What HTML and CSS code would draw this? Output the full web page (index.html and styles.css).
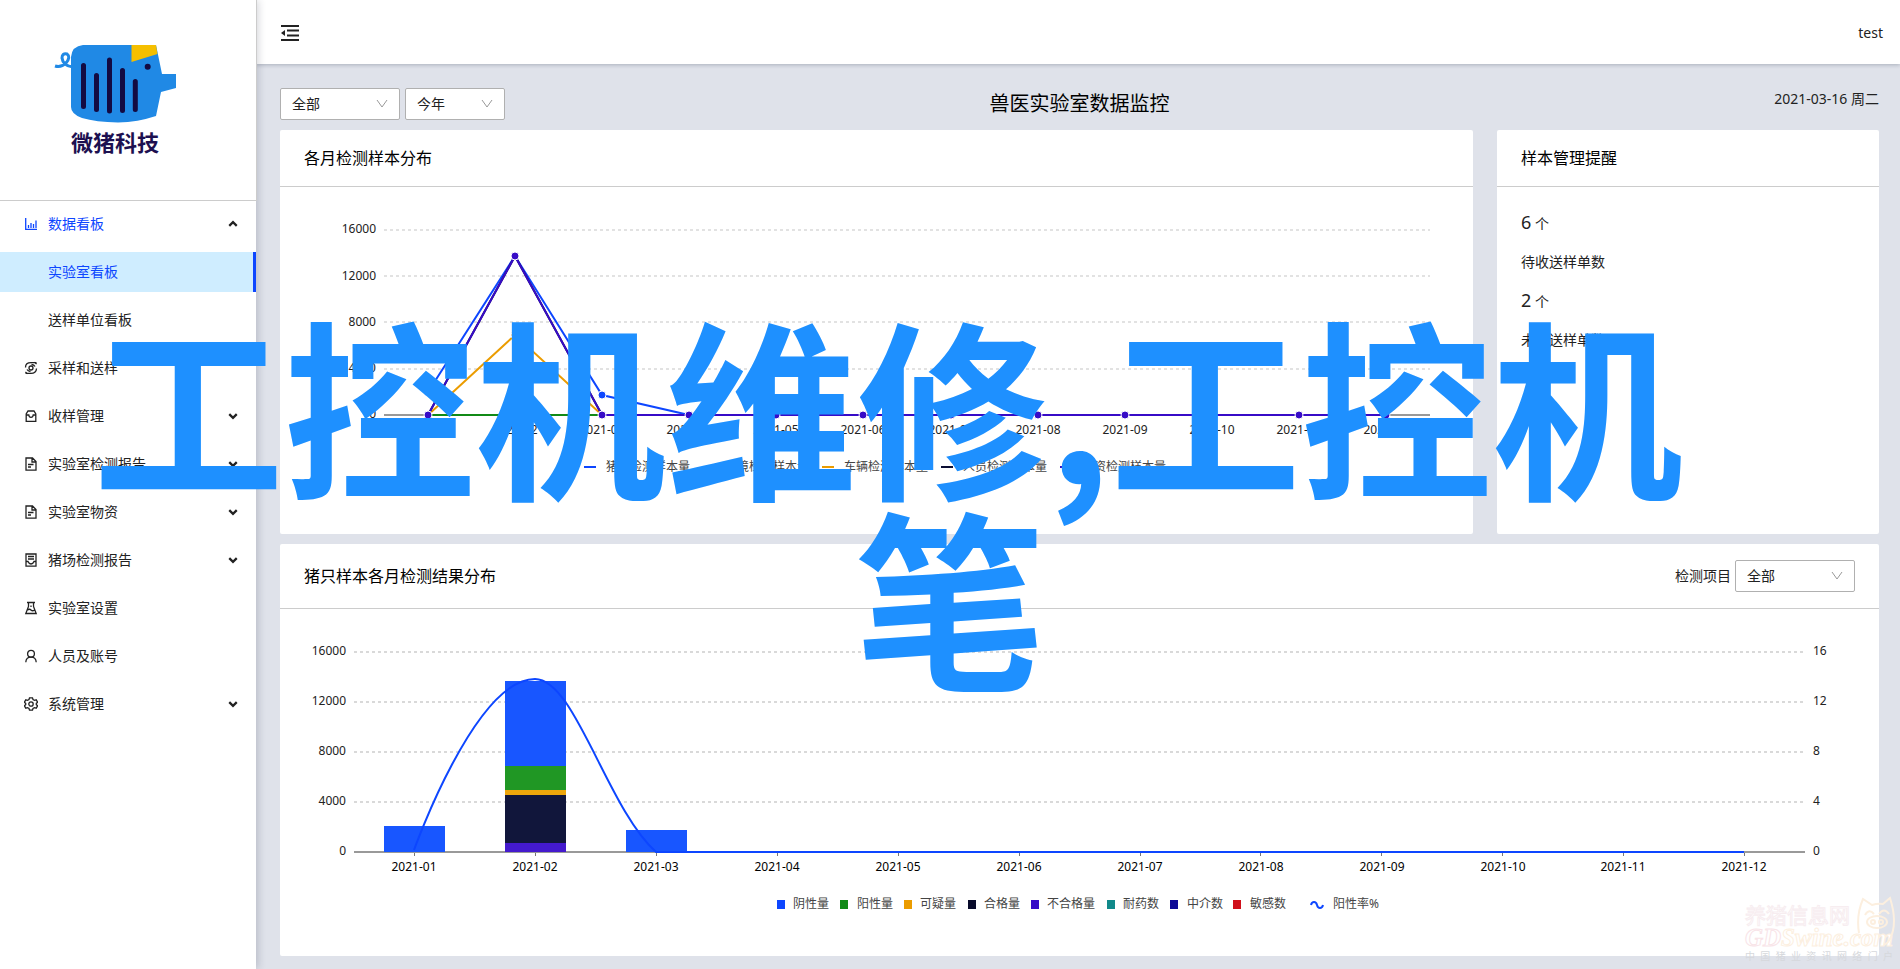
FILE: index.html
```html
<!DOCTYPE html>
<html lang="zh-CN">
<head>
<meta charset="utf-8">
<title>兽医实验室数据监控</title>
<link rel="stylesheet" href="styles.css">
</head>
<body>
<div class="app">
  <aside class="sidebar">
    <div class="brand">
      <svg class="brand-logo" viewBox="0 0 256 200" role="img" aria-label="微猪科技">
        <path d="M55 66 Q61 68 66 63 Q71 57 67 54 Q62 53 62 58 Q63 66 73 67" fill="none" stroke="#2089e5" stroke-width="3"/>
        <path d="M83 45 H156 L162 74 H176 V88 L161 92 L156 116 Q138 122 118 122.500 Q96 122 82 118 Q71 114 71 107 V57 Q72 46 83 45Z" fill="#2089e5"/>
        <path d="M131.500 45 H156 L157.500 54 L131.500 62Z" fill="#f5bf00"/>
        <circle cx="147.700" cy="66.700" r="3" fill="#130a42"/>
        <path d="M83.500 65.500V106.500M96.500 75.500V109.500M109.500 60V111M122.500 70.500V110.500M135.300 81.500V109.500" stroke="#130a42" stroke-width="5" stroke-linecap="round"/>
        <text x="71" y="151" class="brand-name">微猪科技</text>
      </svg>
    </div>
    <nav class="menu">
      <a class="menu-item is-open" href="#">
        <svg class="menu-icon" viewBox="0 0 14 14"><path d="M1.700 1V12.300H13M4.500 11V8M7 11V6M9.500 11V7M12 11V3.500"/></svg>
        <span class="menu-text">数据看板</span>
        <svg class="menu-arrow" viewBox="0 0 8 8"><path d="M1 5.500L4 2.500L7 5.500"/></svg>
      </a>
      <a class="menu-item is-sub is-active" href="#">实验室看板</a>
      <a class="menu-item is-sub" href="#">送样单位看板</a>
      <a class="menu-item" href="#">
        <svg class="menu-icon" viewBox="0 0 14 14"><circle cx="7" cy="7" r="2"/><path d="M1.500 6.500C1.500 3 4 1.700 7 1.700H12.500M10.500 1.200L12.600 3M12.500 7.500C12.500 11 10 12.300 7 12.300H1.500M3.500 12.800L1.400 11M3 8.500C3.800 10 5 10.300 6.500 10.500M11 5.500C10.200 4 9 3.700 7.500 3.500"/></svg>
        <span class="menu-text">采样和送样</span>
      </a>
      <a class="menu-item" href="#">
        <svg class="menu-icon" viewBox="0 0 14 14"><path d="M2.200 12.300V5L4 2H10L11.800 5V12.300ZM2.200 6H4.800Q5 8.300 7 8.300T9.200 6H11.800"/></svg>
        <span class="menu-text">收样管理</span>
        <svg class="menu-arrow" viewBox="0 0 8 8"><path d="M1 2.500L4 5.500L7 2.500"/></svg>
      </a>
      <a class="menu-item" href="#">
        <svg class="menu-icon" viewBox="0 0 14 14"><path d="M2 1H8.500L12 4.500V13.200H2ZM8 1V5H12M4 7.500H9.500M4 10H7"/></svg>
        <span class="menu-text">实验室检测报告</span>
        <svg class="menu-arrow" viewBox="0 0 8 8"><path d="M1 2.500L4 5.500L7 2.500"/></svg>
      </a>
      <a class="menu-item" href="#">
        <svg class="menu-icon" viewBox="0 0 14 14"><path d="M2 1H8.500L12 4.500V13.200H2ZM8 1V5H12M4 7.500H9.500M4 10H7"/></svg>
        <span class="menu-text">实验室物资</span>
        <svg class="menu-arrow" viewBox="0 0 8 8"><path d="M1 2.500L4 5.500L7 2.500"/></svg>
      </a>
      <a class="menu-item" href="#">
        <svg class="menu-icon" viewBox="0 0 14 14"><path d="M2 1H12V13.200H2ZM4 3.500H10M4 6H10M2 8.500H4Q5 11 7 11T10 8.500H12"/></svg>
        <span class="menu-text">猪场检测报告</span>
        <svg class="menu-arrow" viewBox="0 0 8 8"><path d="M1 2.500L4 5.500L7 2.500"/></svg>
      </a>
      <a class="menu-item" href="#">
        <svg class="menu-icon" viewBox="0 0 14 14"><path d="M3 1.500H11M4.500 1.500V5.500L1.800 12.500H12.200L9.500 5.500V1.500M3.500 9Q5.500 7.500 7 9T10.500 9M7 4.500V6"/></svg>
        <span class="menu-text">实验室设置</span>
      </a>
      <a class="menu-item" href="#">
        <svg class="menu-icon" viewBox="0 0 14 14"><circle cx="7" cy="4.700" r="3.400"/><path d="M1.800 13.200Q2 8.200 7 8.200T12.200 13.200"/></svg>
        <span class="menu-text">人员及账号</span>
      </a>
      <a class="menu-item" href="#">
        <svg class="menu-icon" viewBox="0 0 14 14"><circle cx="7" cy="7" r="2.200"/><path d="M5.500 0.800H8.500L9 2.500L10.500 3.300L12.200 2.800L13.600 5.200L12.300 6.400V7.600L13.600 8.800L12.200 11.200L10.500 10.700L9 11.500L8.500 13.200H5.500L5 11.500L3.500 10.700L1.800 11.200L0.400 8.800L1.700 7.600V6.400L0.400 5.200L1.800 2.800L3.500 3.300L5 2.500Z"/></svg>
        <span class="menu-text">系统管理</span>
        <svg class="menu-arrow" viewBox="0 0 8 8"><path d="M1 2.500L4 5.500L7 2.500"/></svg>
      </a>
    </nav>
  </aside>

  <div class="page">
    <header class="topbar">
      <button class="fold" type="button" aria-label="收起菜单">
        <svg viewBox="0 0 20 18"><path d="M1 2H19M7 6.500H19M7 11.500H19M1 16H19" fill="none" stroke="#222" stroke-width="2"/><path d="M5 6V12L1 9Z" fill="#222"/></svg>
      </button>
      <span class="user">test</span>
    </header>

    <main class="content">
      <div class="toolbar">
        <div class="filters">
          <span class="select">
            <select aria-label="范围"><option>全部</option></select>
            <svg viewBox="0 0 12 12"><path d="M1 2L6 9L11 2"/></svg>
          </span>
          <span class="select is-narrow">
            <select aria-label="时间"><option>今年</option></select>
            <svg viewBox="0 0 12 12"><path d="M1 2L6 9L11 2"/></svg>
          </span>
        </div>
        <h1 class="title">兽医实验室数据监控</h1>
        <time class="date" datetime="2021-03-16">2021-03-16 周二</time>
      </div>

      <div class="row">
        <section class="card">
          <div class="card-head"><h2>各月检测样本分布</h2></div>
          <svg class="chart" viewBox="280 187 1193 347">
            <g class="grid">
              <path d="M384 230H1430M384 276H1430M384 322H1430M384 369H1430"/>
            </g>
            <path class="axis" d="M384 415H1430"/>
            <g class="label is-end">
              <text x="376" y="233">16000</text><text x="376" y="280">12000</text><text x="376" y="326">8000</text><text x="376" y="372">4000</text><text x="376" y="418">0</text>
            </g>
            <g class="label is-mid">
              <text x="428" y="434">2021-01</text><text x="515" y="434">2021-02</text><text x="602" y="434">2021-03</text><text x="689" y="434">2021-04</text><text x="776" y="434">2021-05</text><text x="863" y="434">2021-06</text><text x="951" y="434">2021-07</text><text x="1038" y="434">2021-08</text><text x="1125" y="434">2021-09</text><text x="1212" y="434">2021-10</text><text x="1299" y="434">2021-11</text><text x="1386" y="434">2021-12</text>
            </g>
            <g class="series">
              <path stroke="#0d46ff" d="M428 392L515 256L602 395L689 415"/>
              <path stroke="#118a17" d="M428 415H602"/>
              <path stroke="#eb9c00" d="M428 415L515 335L602 415"/>
              <path stroke="#0b0e33" d="M428 415L515 256L602 415"/>
              <path stroke="#370bc7" d="M428 415L515 256L602 415H1386"/>
            </g>
            <g class="dots">
              <circle class="is-blue" cx="428" cy="392" r="4"/><circle class="is-blue" cx="602" cy="395" r="4"/>
              <circle class="is-amber" cx="515" cy="335" r="4"/>
              <circle cx="428" cy="415" r="4"/><circle cx="515" cy="256" r="4"/><circle cx="602" cy="415" r="4"/><circle cx="689" cy="415" r="4"/><circle cx="776" cy="415" r="4"/><circle cx="863" cy="415" r="4"/><circle cx="951" cy="415" r="4"/><circle cx="1038" cy="415" r="4"/><circle cx="1125" cy="415" r="4"/><circle cx="1212" cy="415" r="4"/><circle cx="1299" cy="415" r="4"/><circle cx="1386" cy="415" r="4"/>
            </g>
            <g class="series">
              <path stroke="#0d46ff" d="M584 467H596"/><path stroke="#118a17" d="M703 467H715"/><path stroke="#eb9c00" d="M822 467H834"/><path stroke="#0b0e33" d="M941 467H953"/><path stroke="#370bc7" d="M1060 467H1072"/>
            </g>
            <g class="legend">
              <text x="606" y="471">猪只检测样本量</text><text x="725" y="471">环境检测样本量</text><text x="844" y="471">车辆检测样本量</text><text x="963" y="471">人员检测样本量</text><text x="1082" y="471">物资检测样本量</text>
            </g>
          </svg>
        </section>

        <section class="card">
          <div class="card-head"><h2>样本管理提醒</h2></div>
          <dl class="notice">
            <dd><b>6</b> 个</dd><dt>待收送样单数</dt>
            <dd><b>2</b> 个</dd><dt>未检送样单数</dt>
          </dl>
        </section>
      </div>

      <section class="card">
        <div class="card-head is-tall">
          <h2>猪只样本各月检测结果分布</h2>
          <div class="field">
            <label for="project">检测项目</label>
            <span class="select">
              <select id="project"><option>全部</option></select>
              <svg viewBox="0 0 12 12"><path d="M1 2L6 9L11 2"/></svg>
            </span>
          </div>
        </div>
        <svg class="chart" viewBox="280 609 1599 347">
          <g class="grid is-bold"><path d="M354 652H1805M354 702H1805M354 752H1805M354 802H1805"/></g>
          <path class="axis" d="M354 852H1805"/>
          <path class="tick" d="M414.500 853V856M535.500 853V856M656.500 853V856M777.500 853V856M898.500 853V856M1019.500 853V856M1140.500 853V856M1260.500 853V856M1381.500 853V856M1502.500 853V856M1623.500 853V856M1744.500 853V856"/>
          <g class="label is-end">
            <text x="346" y="655">16000</text><text x="346" y="705">12000</text><text x="346" y="755">8000</text><text x="346" y="805">4000</text><text x="346" y="855">0</text>
          </g>
          <g class="label">
            <text x="1813" y="655">16</text><text x="1813" y="705">12</text><text x="1813" y="755">8</text><text x="1813" y="805">4</text><text x="1813" y="855">0</text>
          </g>
          <g class="label is-mid is-dark">
            <text x="414" y="871">2021-01</text><text x="535" y="871">2021-02</text><text x="656" y="871">2021-03</text><text x="777" y="871">2021-04</text><text x="898" y="871">2021-05</text><text x="1019" y="871">2021-06</text><text x="1140" y="871">2021-07</text><text x="1261" y="871">2021-08</text><text x="1382" y="871">2021-09</text><text x="1503" y="871">2021-10</text><text x="1623" y="871">2021-11</text><text x="1744" y="871">2021-12</text>
          </g>
          <rect x="384" y="826" width="61" height="26" fill="#1856ff"/>
          <rect x="626" y="830" width="61" height="22" fill="#1856ff"/>
          <rect x="505" y="681" width="61" height="85" fill="#1856ff"/>
          <rect x="505" y="766" width="61" height="24" fill="#209724"/>
          <rect x="505" y="790" width="61" height="5" fill="#eda60c"/>
          <rect x="505" y="795" width="61" height="48" fill="#11163b"/>
          <rect x="505" y="843" width="61" height="9" fill="#441acd"/>
          <g class="series"><path stroke="#0d46ff" d="M414 850C414 850 475 679 535 679C575 679 607 808 656 852H1744"/></g>
          <rect x="777" y="900" width="8" height="9" fill="#0d46ff"/><rect x="840" y="900" width="8" height="9" fill="#118a17"/><rect x="904" y="900" width="8" height="9" fill="#eb9c00"/><rect x="968" y="900" width="8" height="9" fill="#080b2b"/><rect x="1031" y="900" width="8" height="9" fill="#370bc7"/><rect x="1107" y="900" width="8" height="9" fill="#11898a"/><rect x="1170" y="900" width="8" height="9" fill="#0d0a96"/><rect x="1233" y="900" width="8" height="9" fill="#d0111c"/>
          <g class="series"><path stroke="#0d46ff" d="M1311 905C1312 901 1316 901 1317 905S1322 909 1323 905"/></g>
          <g class="legend">
            <text x="793" y="908">阴性量</text><text x="857" y="908">阳性量</text><text x="920" y="908">可疑量</text><text x="984" y="908">合格量</text><text x="1047" y="908">不合格量</text><text x="1123" y="908">耐药数</text><text x="1187" y="908">中介数</text><text x="1250" y="908">敏感数</text><text x="1333" y="908">阳性率%</text>
          </g>
        </svg>
      </section>
    </main>
  </div>

  <div class="headline">
    <span class="headline-first">工控机维修,工控机</span>
    <span>笔</span>
  </div>

  <div class="stamp">
    <svg class="stamp-pig" viewBox="0 0 40 52"><path d="M3 38Q0 20 7 4L16 10Q22 8 27 9L34 3Q42 28 34 44Q32 48 28 50M9 20Q13 13 18 19M23 19Q28 12 33 19"/><ellipse cx="21" cy="27" rx="10" ry="6"/><circle cx="17" cy="27" r="2"/><circle cx="25" cy="27" r="2"/></svg>
    <div class="stamp-name">养猪信息网</div>
    <div class="stamp-site"><i>GD</i>Swine.com</div>
    <div class="stamp-line"><span>中</span><span>国</span><span>猪</span><span>业</span><span>资</span><span>讯</span><span>网</span><span>络</span><span>门</span><span>户</span></div>
  </div>
</div>
</body>
</html>
```

FILE: styles.css
```css
* { box-sizing: border-box; }

body {
  margin: 0;
  background: #dfe2ea;
  color: #222;
  font: 14px/20px "Noto Sans", "Noto Sans CJK SC", sans-serif;
}

.app {
  position: relative;
  display: flex;
  min-height: 100vh;
  overflow: hidden;
}

/* Sidebar */
.sidebar {
  position: relative;
  z-index: 2;
  flex: 0 0 256px;
  min-width: 0;
  background: #fff;
  box-shadow: 2px 0 8px rgba(30, 35, 60, 0.2);
}

.brand {
  width: 257px;
  border-right: 1px solid #ccc;
  border-bottom: 1px solid #ccc;
}

.brand-logo { display: block; width: 256px; }

.brand-name {
  font-size: 22px;
  font-weight: 700;
  fill: #1d1050;
}

.menu { padding-top: 3px; }

.menu-item {
  display: flex;
  align-items: center;
  gap: 10px;
  height: 40px;
  margin-bottom: 8px;
  padding: 0 18px 0 24px;
  color: #222;
  text-decoration: none;
}

.menu-item.is-open { color: #0d46ff; }
.menu-item.is-sub { padding-left: 48px; }

.menu-item.is-active {
  color: #0d46ff;
  background: #cfedff;
  border-right: 3px solid #0d46ff;
}

.menu-text { flex: 1; }

.menu-icon {
  width: 14px;
  height: 14px;
  fill: none;
  stroke: currentColor;
  stroke-width: 1.3;
}

.menu-arrow {
  width: 10px;
  height: 10px;
  fill: none;
  stroke: #222;
  stroke-width: 1.8;
}

/* Page */
.page { flex: 1; min-width: 0; }

.topbar {
  position: relative;
  display: flex;
  align-items: center;
  justify-content: space-between;
  height: 64px;
  padding: 2px 17px 0 24px;
  background: #fff;
  box-shadow: 0 1px 4px rgba(0, 21, 41, 0.24);
}

.fold {
  display: flex;
  width: 20px;
  padding: 0;
  border: 0;
  background: none;
}

.fold svg { width: 20px; height: 18px; }

.content {
  display: flex;
  flex-direction: column;
  gap: 10px;
  padding: 24px 21px 13px 24px;
}

.toolbar {
  display: grid;
  grid-template-columns: 1fr auto 1fr;
  align-items: center;
}

.filters { display: flex; gap: 5px; }

.title {
  margin: 0;
  color: #000;
  font-size: 20px;
  font-weight: 400;
  line-height: 32px;
}

.date {
  justify-self: end;
  align-self: start;
  line-height: 22px;
}

.select { position: relative; display: block; width: 120px; }
.select.is-narrow { width: 100px; }

.select select {
  display: block;
  width: 100%;
  height: 32px;
  padding: 0 11px;
  appearance: none;
  border: 1px solid #b0b0b0;
  border-radius: 2px;
  background: #fff;
  color: #222;
  font: inherit;
}

.select svg {
  position: absolute;
  top: 10px;
  right: 12px;
  width: 12px;
  height: 12px;
  fill: none;
  stroke: #999;
  pointer-events: none;
}

/* Cards */
.row {
  display: grid;
  grid-template-columns: 1193fr 382fr;
  gap: 24px;
}

.card { border-radius: 2px; background: #fff; }

.card-head {
  display: flex;
  align-items: center;
  justify-content: space-between;
  height: 57px;
  padding: 0 24px;
  border-bottom: 1px solid #ccc;
}

.card-head.is-tall { height: 65px; }

.card-head h2 {
  margin: 0;
  color: #000;
  font-size: 16px;
  font-weight: 400;
  line-height: 24px;
}

.field { display: flex; align-items: center; gap: 4px; }

.notice { margin: 0; padding: 16px 24px; line-height: 38px; }
.notice dd { margin: 0; }
.notice b { font-size: 18px; font-weight: 400; }

/* Charts */
.chart { display: block; width: 100%; }
.grid path { fill: none; stroke: #d9d9d9; stroke-width: 1.5; stroke-dasharray: 3 3; }
.grid.is-bold path { stroke-width: 2; }
.axis { stroke: #999; stroke-width: 2; }
.tick { stroke: #777; }
.label { font-size: 12px; fill: #222; }
.is-end { text-anchor: end; }
.is-mid { text-anchor: middle; }
.is-dark { fill: #000; }
.series path { fill: none; stroke-width: 2; }
.dots circle { fill: #370bc7; stroke: #fff; }
.dots .is-blue { fill: #0d46ff; }
.dots .is-amber { fill: #eb9c00; }
.legend { font-size: 12px; fill: #444; }

/* Large caption over the dashboard */
.headline {
  position: absolute;
  z-index: 3;
  top: 306px;
  left: 0;
  right: 0;
  display: flex;
  flex-direction: column;
  align-items: center;
  color: #1e90ff;
  font: 700 191px/191px "Noto Sans CJK SC", sans-serif;
  white-space: nowrap;
  pointer-events: none;
}

.headline-first { margin-right: 124px; }

/* Corner stamp */
.stamp {
  position: absolute;
  z-index: 4;
  right: 7px;
  bottom: 6px;
  width: 148px;
  color: #fff;
  pointer-events: none;
}

.stamp-pig {
  position: absolute;
  top: -9px;
  right: -3px;
  width: 40px;
  height: 52px;
  fill: none;
  stroke: #fcefdf;
  stroke-width: 2;
}

.stamp-name {
  font-size: 21px;
  line-height: 23px;
  -webkit-text-stroke: 1px #f7edf0;
}

.stamp-site {
  font: italic 700 25px/22px "Liberation Serif", serif;
  -webkit-text-stroke: 1px #fcefdf;
}

.stamp-site i { -webkit-text-stroke: 1px #f8e4e8; }

.stamp-line {
  display: flex;
  justify-content: space-between;
  color: #d6d8dc;
  font-size: 10px;
  line-height: 14px;
}
```
